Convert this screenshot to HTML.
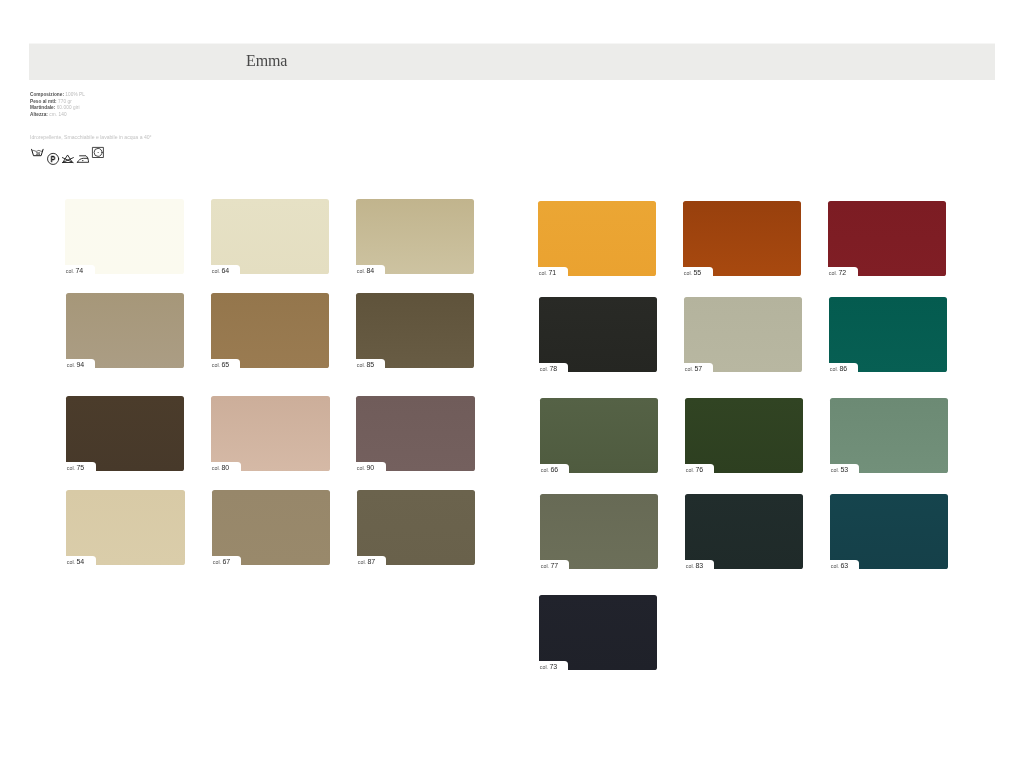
<!DOCTYPE html>
<html lang="it">
<head>
<meta charset="utf-8">
<title>Emma</title>
<style>
html,body{margin:0;padding:0;background:#fff;}
body{width:1024px;height:768px;position:relative;overflow:hidden;font-family:"Liberation Sans",Arial,sans-serif;}
.bar{position:absolute;left:29px;top:44px;width:966px;height:36px;background:#ececea;box-shadow:0 -1px 0 #f6f6f5;}
.title{position:absolute;left:246px;top:51px;font-family:"Liberation Serif","Times New Roman",serif;font-size:16px;line-height:20px;color:#484848;letter-spacing:-0.1px;white-space:nowrap;}
.specs{position:absolute;left:30px;top:91.8px;font-size:4.7px;line-height:6.55px;color:#b9b9b9;white-space:nowrap;}
.specs b{color:#525252;font-weight:bold;letter-spacing:0.03px;}
.specs i{font-style:normal;letter-spacing:0.1px;}
.note{position:absolute;left:30px;top:133.8px;font-size:5.12px;line-height:6.5px;color:#c2c2c2;white-space:nowrap;}
.icons{will-change:transform;position:absolute;left:28px;top:142px;width:80px;height:30px;}
.sw{position:absolute;width:118.3px;height:75.0px;border-radius:2.6px 2.6px 2.6px 0;}
.tag{position:absolute;left:0;bottom:0;width:29.5px;height:9.2px;background:#fff;border-top-right-radius:3.5px;white-space:nowrap;font-size:7px;line-height:9.2px;}
.tag span{position:absolute;}
.lab{will-change:transform;position:absolute;left:0;top:0;width:29.5px;height:9.2px;}
.tag .c{font-size:5.3px;color:#6c6c6c;left:0.8px;top:1.7px;-webkit-text-stroke:0.06px #6c6c6c;}
.tag .n{font-size:7px;color:#2a2a2a;left:10.4px;top:1.1px;}
.title,.specs,.note{will-change:transform;}
.tubn{position:absolute;left:33.5px;top:150.9px;width:8px;text-align:center;font-size:4px;line-height:5px;font-weight:bold;color:#1c1c1c;will-change:transform;}
.pl{position:absolute;left:49.3px;top:154.8px;width:8px;text-align:center;font-size:8.2px;line-height:9px;font-weight:bold;color:#1c1c1c;will-change:transform;transform:scaleX(0.8);-webkit-text-stroke:0.4px #1c1c1c;}
</style>
</head>
<body>
<div class="bar"></div>
<div class="title">Emma</div>
<div class="specs">
<div><b>Composizione:</b> <i>100% PL</i></div>
<div><b>Peso al mtl:</b> <i>770 gr</i></div>
<div><b>Martindale:</b> <i>60.000 giri</i></div>
<div><b>Altezza:</b> <i>cm. 140</i></div>
</div>
<div class="note">Idrorepellente, Smacchiabile e lavabile in acqua a 40°</div>
<svg class="icons" viewBox="28 142 80 30" fill="none" stroke="#1c1c1c" stroke-width="1" stroke-linejoin="round" stroke-linecap="round">
<!-- wash tub -->
<path d="M31.6 149.3 L33.5 155.7 H41.1 L43.1 149.3"/>
<path d="M32.3 150.9 q1.3 -1 2.6 0 t2.6 0 t2.6 0 t2.6 0" stroke-width="0.65"/>
<!-- P circle -->
<circle cx="53.1" cy="158.9" r="5.55" stroke-width="0.9"/>
<!-- no bleach -->
<path d="M67.8 155.3 L72.4 162.5 H63.2 Z" stroke-width="0.9"/>
<path d="M62.4 157.6 L73.2 162.6 M73.4 157.6 L62.4 162.6" stroke-width="0.9"/>
<!-- iron -->
<path d="M77.4 162.3 H88.6 C88.4 159.4 87.6 157 86 155.8 H79.6 M77.4 162.3 C78.6 160 80.4 158.6 83.2 158.3 H87.8" stroke-width="0.9"/>
<circle cx="82.8" cy="160.6" r="0.7" fill="#222" stroke="none"/>
<!-- tumble dry -->
<rect x="92.8" y="147.4" width="10.6" height="10.1" stroke-width="0.8"/>
<circle cx="98.1" cy="152.4" r="4.0" stroke-width="0.8"/>
<circle cx="98.1" cy="152.4" r="0.5" fill="#222" stroke="none"/>
</svg>
<div class="tubn">30</div>
<div class="pl">P</div>
<div class="sw" style="left:65.4px;top:199.0px;background:linear-gradient(180deg,#fbfaf0,#fbfaef)"><div class="tag"><div class="lab"><span class="c">col.</span> <span class="n">74</span></div></div></div>
<div class="sw" style="left:210.5px;top:199.0px;background:linear-gradient(180deg,#e6e1c5,#e4dec1)"><div class="tag"><div class="lab"><span class="c">col.</span> <span class="n">64</span></div></div></div>
<div class="sw" style="left:355.5px;top:199.0px;background:linear-gradient(180deg,#c1b48d,#cdc3a1)"><div class="tag"><div class="lab"><span class="c">col.</span> <span class="n">84</span></div></div></div>
<div class="sw" style="left:65.7px;top:293.0px;background:linear-gradient(180deg,#a69779,#ab9d84)"><div class="tag"><div class="lab"><span class="c">col.</span> <span class="n">94</span></div></div></div>
<div class="sw" style="left:210.8px;top:293.0px;background:linear-gradient(180deg,#94764c,#9a7b51)"><div class="tag"><div class="lab"><span class="c">col.</span> <span class="n">65</span></div></div></div>
<div class="sw" style="left:355.8px;top:293.0px;background:linear-gradient(180deg,#5f533b,#685c44)"><div class="tag"><div class="lab"><span class="c">col.</span> <span class="n">85</span></div></div></div>
<div class="sw" style="left:66.2px;top:395.8px;background:linear-gradient(180deg,#4b3c2b,#47392a)"><div class="tag"><div class="lab"><span class="c">col.</span> <span class="n">75</span></div></div></div>
<div class="sw" style="left:211.3px;top:395.8px;background:linear-gradient(180deg,#ccae9a,#d5b9a6)"><div class="tag"><div class="lab"><span class="c">col.</span> <span class="n">80</span></div></div></div>
<div class="sw" style="left:356.3px;top:395.8px;background:linear-gradient(180deg,#705c5a,#74605e)"><div class="tag"><div class="lab"><span class="c">col.</span> <span class="n">90</span></div></div></div>
<div class="sw" style="left:66.4px;top:489.8px;background:linear-gradient(180deg,#d8caa6,#dacdaa)"><div class="tag"><div class="lab"><span class="c">col.</span> <span class="n">54</span></div></div></div>
<div class="sw" style="left:211.5px;top:489.8px;background:linear-gradient(180deg,#97876a,#99896b)"><div class="tag"><div class="lab"><span class="c">col.</span> <span class="n">67</span></div></div></div>
<div class="sw" style="left:356.5px;top:489.8px;background:linear-gradient(180deg,#6b634d,#69614b)"><div class="tag"><div class="lab"><span class="c">col.</span> <span class="n">87</span></div></div></div>
<div class="sw" style="left:538.2px;top:200.8px;background:linear-gradient(180deg,#eba634,#eaa230)"><div class="tag"><div class="lab"><span class="c">col.</span> <span class="n">71</span></div></div></div>
<div class="sw" style="left:683.2px;top:200.8px;background:linear-gradient(180deg,#98400d,#a8490f)"><div class="tag"><div class="lab"><span class="c">col.</span> <span class="n">55</span></div></div></div>
<div class="sw" style="left:828.2px;top:200.8px;background:linear-gradient(180deg,#7c1c23,#801e25)"><div class="tag"><div class="lab"><span class="c">col.</span> <span class="n">72</span></div></div></div>
<div class="sw" style="left:538.7px;top:297.2px;background:linear-gradient(180deg,#292a26,#252622)"><div class="tag"><div class="lab"><span class="c">col.</span> <span class="n">78</span></div></div></div>
<div class="sw" style="left:683.7px;top:297.2px;background:linear-gradient(180deg,#b4b39d,#b8b7a1)"><div class="tag"><div class="lab"><span class="c">col.</span> <span class="n">57</span></div></div></div>
<div class="sw" style="left:828.7px;top:297.2px;background:linear-gradient(180deg,#045b4f,#075f53)"><div class="tag"><div class="lab"><span class="c">col.</span> <span class="n">86</span></div></div></div>
<div class="sw" style="left:539.7px;top:398.1px;background:linear-gradient(180deg,#556246,#4f5b3f)"><div class="tag"><div class="lab"><span class="c">col.</span> <span class="n">66</span></div></div></div>
<div class="sw" style="left:684.7px;top:398.1px;background:linear-gradient(180deg,#314423,#2d3f20)"><div class="tag"><div class="lab"><span class="c">col.</span> <span class="n">76</span></div></div></div>
<div class="sw" style="left:829.7px;top:398.1px;background:linear-gradient(180deg,#6c8a74,#72907a)"><div class="tag"><div class="lab"><span class="c">col.</span> <span class="n">53</span></div></div></div>
<div class="sw" style="left:539.7px;top:493.9px;background:linear-gradient(180deg,#676a55,#6c6f59)"><div class="tag"><div class="lab"><span class="c">col.</span> <span class="n">77</span></div></div></div>
<div class="sw" style="left:684.7px;top:493.9px;background:linear-gradient(180deg,#212d2c,#1f2a29)"><div class="tag"><div class="lab"><span class="c">col.</span> <span class="n">83</span></div></div></div>
<div class="sw" style="left:829.7px;top:493.9px;background:linear-gradient(180deg,#15444d,#154049)"><div class="tag"><div class="lab"><span class="c">col.</span> <span class="n">63</span></div></div></div>
<div class="sw" style="left:538.8px;top:594.8px;background:linear-gradient(180deg,#21232c,#1f2129)"><div class="tag"><div class="lab"><span class="c">col.</span> <span class="n">73</span></div></div></div>
</body>
</html>
